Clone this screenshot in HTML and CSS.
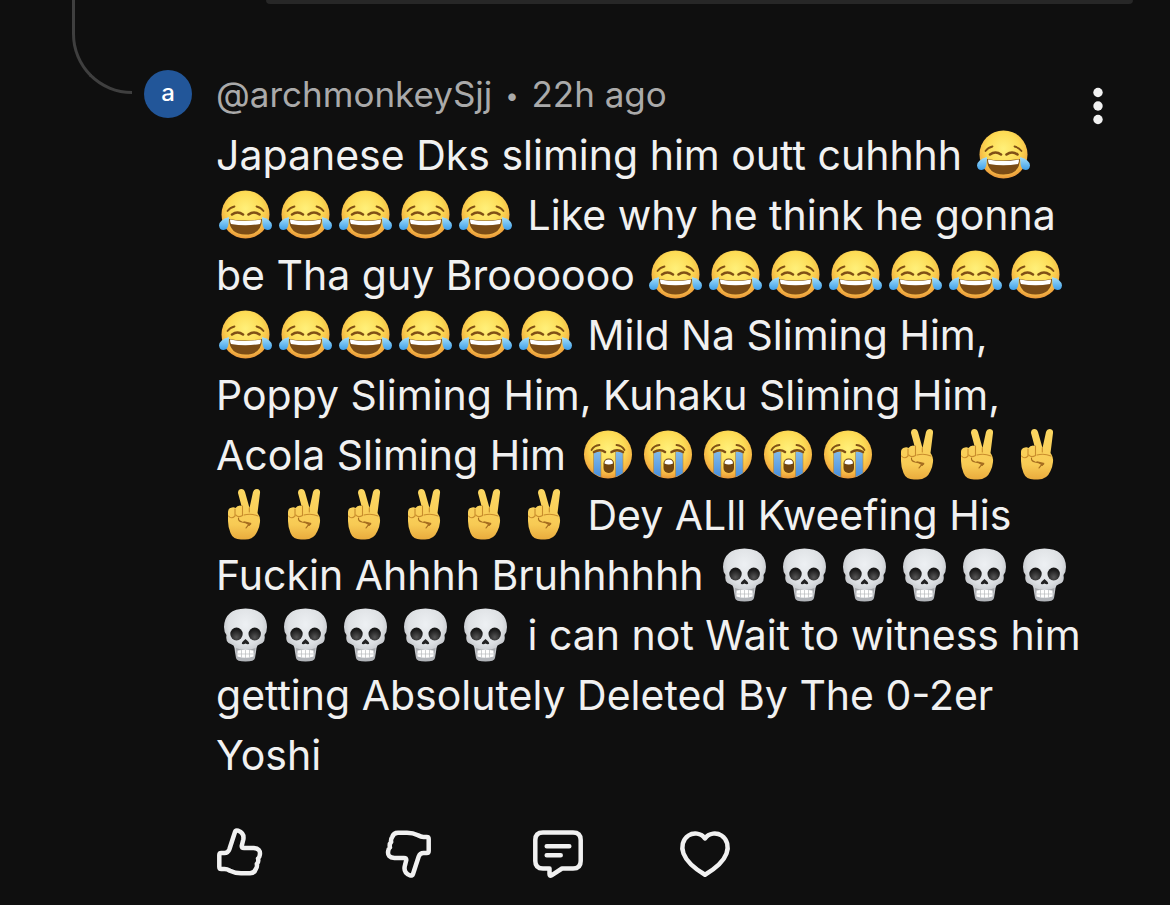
FILE: index.html
```
<!DOCTYPE html>
<html lang="en">
<head>
    <meta charset="UTF-8">
    <meta name="viewport" content="width=device-width, initial-scale=1.0">
    <title>Comments</title>
    <link rel="stylesheet" href="styles.css">
</head>
<body>
    <!-- Emoji shapes -->
    <svg class="sprites" aria-hidden="true">
        <defs>
            <radialGradient id="face" cx="50%" cy="38%" r="62%">
                <stop offset="0" stop-color="#fff07a"/>
                <stop offset="0.55" stop-color="#fddc55"/>
                <stop offset="0.85" stop-color="#f5b544"/>
                <stop offset="1" stop-color="#e8963a"/>
            </radialGradient>
            <linearGradient id="tear" x1="0" y1="0" x2="0" y2="1">
                <stop offset="0" stop-color="#a5e0fb"/>
                <stop offset="1" stop-color="#3f9fe8"/>
            </linearGradient>
            <linearGradient id="stream" x1="0" y1="0" x2="0" y2="1">
                <stop offset="0" stop-color="#82b9e8"/>
                <stop offset="1" stop-color="#4a90dc"/>
            </linearGradient>
            <linearGradient id="hand" x1="0" y1="0" x2="0" y2="1">
                <stop offset="0" stop-color="#fbd762"/>
                <stop offset="0.7" stop-color="#f8cb55"/>
                <stop offset="1" stop-color="#e9ab3d"/>
            </linearGradient>
            <radialGradient id="bone" cx="50%" cy="30%" r="65%">
                <stop offset="0" stop-color="#edf0f3"/>
                <stop offset="0.6" stop-color="#dde0e3"/>
                <stop offset="1" stop-color="#b2b5ba"/>
            </radialGradient>
            <radialGradient id="socket" cx="50%" cy="75%" r="60%">
                <stop offset="0" stop-color="#555"/>
                <stop offset="1" stop-color="#191919"/>
            </radialGradient>
        </defs>
        <symbol id="joy" viewBox="0 0 60 60">
            <circle cx="29.500" cy="29.500" r="24" fill="url(#face)"/>
            <g fill="none" stroke="#805016" stroke-linecap="round">
                <path d="M11.500 26Q14 22.500 18.500 21.500M47.500 26Q45 22.500 40.500 21.500" stroke-width="1.800"/>
                <path d="M16 29.500Q21.500 25.500 27 29.500M32.500 29.500Q38 25.500 43.500 29.500" stroke-width="2.600"/>
            </g>
            <path d="M13 34Q29.500 37 46 34Q45.500 49.500 29.500 49.500T13 34Z" fill="#7b4c16"/>
            <path d="M14 34.500Q29.500 37.500 45 34.500Q45 37.500 44 39Q29.500 41.500 15 39Q14 37.500 14 34.500Z" fill="#fff"/>
            <path d="M13 32Q3.500 34.500 3 40.500Q3.500 45 7.500 45Q12 44.500 12.500 39Z" fill="url(#tear)"/>
            <path d="M46 32Q55.500 34.500 56 40.500Q55.500 45 51.500 45Q47 44.500 46.500 39Z" fill="url(#tear)"/>
        </symbol>
        <symbol id="sob" viewBox="0 0 60 60">
            <circle cx="30" cy="29.500" r="24" fill="url(#face)"/>
            <path d="M15.500 27H23V52Q19 50.500 15.500 48ZM37.500 27H45V48Q41.500 50.500 37.500 52Z" fill="url(#stream)"/>
            <path d="M15.500 27V48M23 27V52M37.500 27V52M45 27V48" stroke="#b98732" stroke-width="0.600"/>
            <g fill="none" stroke="#805016" stroke-linecap="round">
                <path d="M13.500 25Q16 20.500 21.500 20M46.500 25Q44 20.500 38.500 20" stroke-width="1.800"/>
                <path d="M16 27Q22 23.500 27 27M33.500 27Q39 23.500 45 27" stroke-width="2.600"/>
            </g>
            <rect x="25.500" y="33.500" width="10.500" height="14.500" rx="5" fill="#6f4511"/>
            <path d="M26.500 38.500Q26.500 34.500 30.700 34.500T35 38.500Q30.700 40.500 26.500 38.500Z" fill="#fff"/>
        </symbol>
        <symbol id="peace" viewBox="2 0 60 60">
            <path d="M24 8Q24 4 27.500 4Q30 4 31 7L35.500 23L39 7Q40 4 43 4Q46.500 4.500 46 8L43.500 28Q46.500 32 46 37Q45.500 42 43.500 46Q40 54.500 31 54.500H27Q19 54.500 16.500 48Q14 42 14 36V27Q14 23 18 22.500Q20 22 21.500 23Q23 20.500 26 20.500L27.500 21Z" fill="url(#hand)"/>
            <g fill="none" stroke="#c98d2d" stroke-linecap="round" stroke-width="1.100">
                <path d="M14.500 31Q17.500 34.500 21 31V24M22 30Q24 33 28.500 30.500V21"/>
                <path d="M35.300 23V27M30 30Q37 28 44 31"/>
            </g>
            <path d="M24.500 33Q24 36 28 37L37 39Q33.500 40 32 43" fill="none" stroke="#a66d20" stroke-width="1.100" stroke-linecap="round"/>
            <path d="M29 36L37.500 38L35.500 41Z" fill="#a66d20"/>
        </symbol>
        <symbol id="skull" viewBox="0 0 60 60">
            <path d="M29.500 3.500Q50.500 4 51 22Q51 27 48.500 30Q49.500 36 46.500 38Q43.500 39 41.500 40.500Q40 43 40 47L39 53Q38.500 56.500 29.500 56.500T20 53L19 47Q19 43 17.500 40.500Q15.500 39 12.500 38Q9.500 36 10.500 30Q8 27 8 22Q8.500 4 29.500 3.500Z" fill="url(#bone)"/>
            <ellipse cx="20.500" cy="29" rx="6.200" ry="6.500" fill="url(#socket)"/>
            <ellipse cx="38.700" cy="29" rx="6.200" ry="6.500" fill="url(#socket)"/>
            <path d="M29.500 34Q34 37.500 33 39Q31 39.500 29.500 38.500Q28 39.500 26 39Q25 37.500 29.500 34Z" fill="#222"/>
            <path d="M20 43Q29.500 47 39.500 43L38.500 48Q29.500 45 20.500 48Z" fill="#a6a8ac"/>
            <path d="M21.500 45.500Q29.500 44 37.500 45.500V51.500Q29.500 54 21.500 51.500Z" fill="#fff"/>
            <path d="M25.500 45V52.500M29.500 45V53M33.500 45V52.500M21.500 49H37.500" stroke="#b9bbbf" stroke-width="0.700"/>
        </symbol>
    </svg>

    <!-- Comment -->
    <article class="comment">
        <div class="thread-line"></div>
        <div class="avatar">a</div>
        <div class="comment-body">
            <div class="parent-reply"></div>
            <header class="comment-header">
                <div class="author">@archmonkeySjj <span class="dot">•</span> 22h ago</div>
                <button class="menu-btn" aria-label="More options">
                    <svg viewBox="0 0 12 40"><circle cx="6" cy="6.500" r="4.700"/><circle cx="6" cy="20" r="4.700"/><circle cx="6" cy="33.500" r="4.700"/></svg>
                </button>
            </header>

            <p class="comment-text">
                Japanese Dks sliming him outt cuhhhh <svg class="emoji"><use href="#joy"/></svg><br>
                <svg class="emoji"><use href="#joy"/></svg><svg class="emoji"><use href="#joy"/></svg><svg class="emoji"><use href="#joy"/></svg><svg class="emoji"><use href="#joy"/></svg><svg class="emoji"><use href="#joy"/></svg> Like why he think he gonna<br>
                be Tha guy Broooooo <svg class="emoji"><use href="#joy"/></svg><svg class="emoji"><use href="#joy"/></svg><svg class="emoji"><use href="#joy"/></svg><svg class="emoji"><use href="#joy"/></svg><svg class="emoji"><use href="#joy"/></svg><svg class="emoji"><use href="#joy"/></svg><svg class="emoji"><use href="#joy"/></svg><br>
                <svg class="emoji"><use href="#joy"/></svg><svg class="emoji"><use href="#joy"/></svg><svg class="emoji"><use href="#joy"/></svg><svg class="emoji"><use href="#joy"/></svg><svg class="emoji"><use href="#joy"/></svg><svg class="emoji"><use href="#joy"/></svg> Mild Na Sliming Him,<br>
                Poppy Sliming Him, Kuhaku Sliming Him,<br>
                Acola Sliming Him <svg class="emoji"><use href="#sob"/></svg><svg class="emoji"><use href="#sob"/></svg><svg class="emoji"><use href="#sob"/></svg><svg class="emoji"><use href="#sob"/></svg><svg class="emoji"><use href="#sob"/></svg> <svg class="emoji"><use href="#peace"/></svg><svg class="emoji"><use href="#peace"/></svg><svg class="emoji"><use href="#peace"/></svg><br>
                <svg class="emoji"><use href="#peace"/></svg><svg class="emoji"><use href="#peace"/></svg><svg class="emoji"><use href="#peace"/></svg><svg class="emoji"><use href="#peace"/></svg><svg class="emoji"><use href="#peace"/></svg><svg class="emoji"><use href="#peace"/></svg> Dey ALll Kweefing His<br>
                Fuckin Ahhhh Bruhhhhhh <svg class="emoji"><use href="#skull"/></svg><svg class="emoji"><use href="#skull"/></svg><svg class="emoji"><use href="#skull"/></svg><svg class="emoji"><use href="#skull"/></svg><svg class="emoji"><use href="#skull"/></svg><svg class="emoji"><use href="#skull"/></svg><br>
                <svg class="emoji"><use href="#skull"/></svg><svg class="emoji"><use href="#skull"/></svg><svg class="emoji"><use href="#skull"/></svg><svg class="emoji"><use href="#skull"/></svg><svg class="emoji"><use href="#skull"/></svg> i can not Wait to witness him<br>
                getting Absolutely Deleted By The 0-2er<br>
                Yoshi
            </p>

            <!-- Actions -->
            <div class="actions">
                <button class="action-btn like" aria-label="Like">
                    <svg viewBox="0 0 52 52"><path id="thumb" d="M3.300 29Q3.300 27 5.300 27H8.500Q12 27 13.300 23.500L19 6Q19.700 3.800 22 4.600Q28.500 7 27.300 13.500L25.700 20Q25.700 22 28 22H37.500Q45 22.500 43.800 29Q43.500 31.500 42 32.500Q43 36 40.800 38Q41.500 40.500 39.800 43Q38.500 47.300 34 47.300H25Q19 47.300 14 44.800Q11 43 8.500 43H5.300Q3.300 43 3.300 41Z"/></svg>
                </button>
                <button class="action-btn" aria-label="Dislike">
                    <svg viewBox="0 0 52 52"><use href="#thumb" transform="rotate(180 23.5 27)"/></svg>
                </button>
                <button class="action-btn" aria-label="Reply">
                    <svg viewBox="0 0 52 52"><path d="M11 6.500H41Q48.700 6.500 48.700 14V35Q48.700 42.500 41 42.500H30L19.500 49.300Q17.500 50.500 17.500 48V42.500H11Q3.300 42.500 3.300 35V14Q3.300 6.500 11 6.500Z"/><path d="M14.700 20.300H37.300M14.700 29.300H28.700"/></svg>
                </button>
                <button class="action-btn" aria-label="Heart">
                    <svg viewBox="0 0 52 52"><path d="M26 12.500C22 6.500 14 6.500 9.500 9.500C3.500 13.500 2 21 4.500 27.500C8 37 18 44 26 48.800C34 44 44 37 47.500 27.500C50 21 48.500 13.500 42.500 9.500C38 6.500 30 6.500 26 12.500Z"/></svg>
                </button>
            </div>
        </div>
    </article>
</body>
</html>
```
FILE: styles.css
```
/* General Styles */
body {
    margin: 0;
    font-family: Inter, "Liberation Sans", sans-serif;
    background-color: #0f0f0f;
    color: #f1f1f1;
}

button {
    padding: 0;
    border: none;
    background: none;
    color: inherit;
    cursor: pointer;
}

.sprites {
    position: absolute;
    width: 0;
    height: 0;
}

/* Comment */
.comment {
    display: flex;
    align-items: flex-start;
    padding-left: 72px;
}

.thread-line {
    box-sizing: border-box;
    width: 60px;
    height: 94px;
    border-left: 3px solid #3f3f3f;
    border-bottom: 3px solid #3f3f3f;
    border-bottom-left-radius: 60px;
}

.avatar {
    flex: none;
    width: 48px;
    height: 48px;
    margin: 70px 24px 0 12px;
    border-radius: 50%;
    background-color: #225699;
    color: #fff;
    font-size: 24px;
    font-weight: 500;
    line-height: 46px;
    text-align: center;
}

.comment-body {
    flex: 1;
}

/* Bottom edge of the reply above */
.parent-reply {
    height: 4px;
    margin: 0 37px 0 50px;
    border-radius: 0 0 12px 12px;
    background-color: #272727;
}

.comment-header {
    display: flex;
    justify-content: space-between;
    height: 61px;
    padding: 60px 66px 0 0;
}

.author {
    color: #aaa;
    font-size: 35px;
    line-height: 60px;
}

.dot {
    margin: 0 3px;
    font-size: 24px;
    vertical-align: 3px;
    line-height: 1;
}

.menu-btn {
    width: 12px;
    height: 40px;
    margin-top: 22px;
}

.menu-btn svg {
    display: block;
    fill: #f1f1f1;
}

.comment-text {
    margin: 0;
    font-size: 41px;
    line-height: 60px;
    white-space: nowrap;
}

.emoji {
    width: 60px;
    height: 60px;
    vertical-align: top;
}

/* Actions */
.actions {
    display: flex;
    padding: 41px 0 27px;
}

.action-btn {
    width: 147px;
    height: 52px;
}

.action-btn.like {
    width: 169px;
}

.action-btn svg {
    display: block;
    width: 52px;
    height: 52px;
    fill: none;
    stroke: #f1f1f1;
    stroke-width: 4.5;
    stroke-linecap: round;
    stroke-linejoin: round;
}
```
